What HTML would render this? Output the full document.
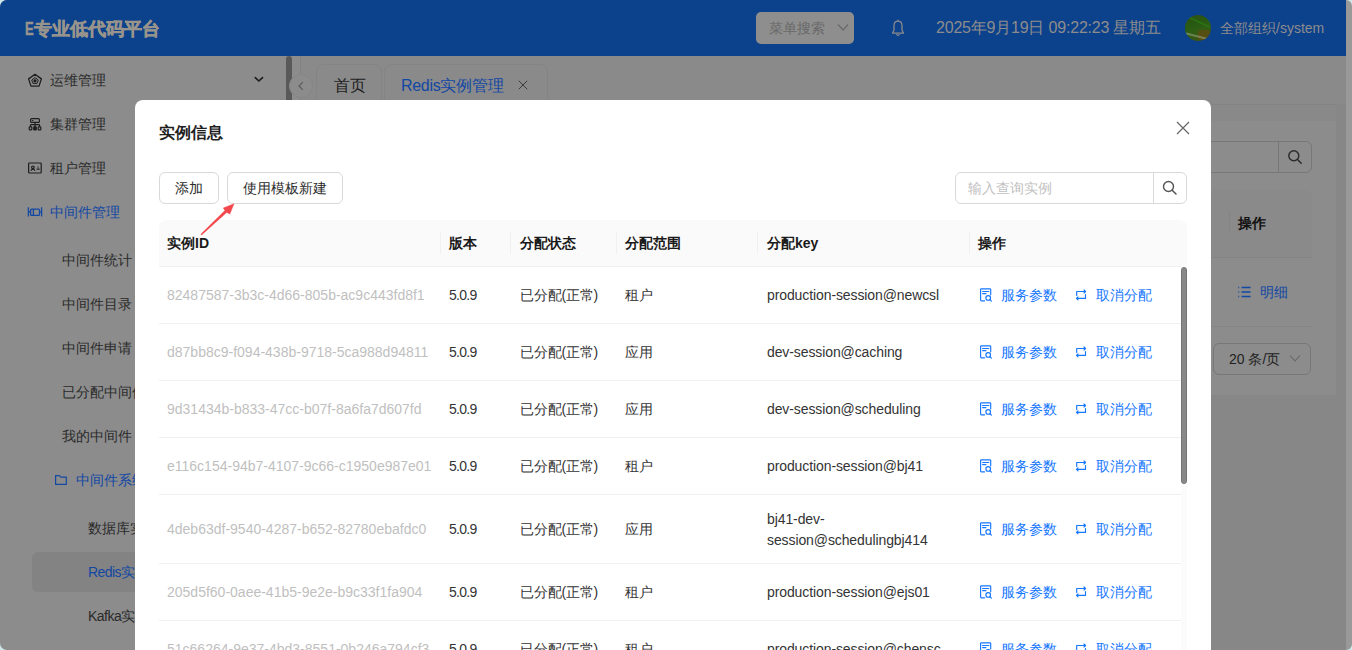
<!DOCTYPE html>
<html><head><meta charset="utf-8">
<style>
*{box-sizing:border-box;margin:0;padding:0}
html,body{width:1352px;height:650px;overflow:hidden;background:#cfe6ea;font-family:"Liberation Sans",sans-serif;font-size:14px}
.abs{position:absolute}
#page{position:absolute;left:0;top:0;width:1346px;height:650px;background:#8c8c8c;border-radius:7px 0 0 7px;overflow:hidden}
#strip{position:absolute;left:1346px;top:0;width:6px;height:650px;background:#999;border-radius:0 7px 7px 0}
#hdr{position:absolute;left:0;top:0;width:1346px;height:56px;background:#0c418c}
.c{position:absolute;white-space:nowrap;height:22px;line-height:22px;font-size:14px}
.side{color:#2a2a2a}
.blue{color:#1247a4}
.cid{color:#bfbfbf}
.cv{color:#333}
.op{color:#1677ff}
.th{top:232px;font-weight:bold;color:#1a1a1a}
.bd{left:159px;width:1022px;height:1px;background:#f0f0f0}
.sep{top:232px;width:1px;height:22px;background:#f0f0f0}
.btn{top:172px;height:32px;border:1px solid #d9d9d9;border-radius:6px;text-align:center;line-height:30px;color:#2b2b2b;font-size:14px;background:#fff}
.ver{letter-spacing:-0.7px}
.st{letter-spacing:-0.2px}
.key{letter-spacing:-0.1px}
</style></head><body>
<div id="page">
  <div id="hdr">
    <div class="abs" style="left:25px;top:18px;height:22px;line-height:22px;font-size:18px;font-weight:bold;color:#98948c;white-space:nowrap;-webkit-text-stroke:0.5px #98948c"><span style="display:inline-block;transform:scaleX(0.72);transform-origin:left;width:9px">E</span>专业低代码平台</div>
    <div class="abs" style="left:756px;top:12px;width:98px;height:32px;background:#8e8e8e;border-radius:5px"></div>
    <div class="c" style="left:769px;top:17px;color:#686868">菜单搜索</div>
    <svg class="abs" style="left:836px;top:22px" width="14" height="11" viewBox="0 0 14 11"><path d="M2 2.5 L7 8 L12 2.5" fill="none" stroke="#6a6a6a" stroke-width="1.2"/></svg>
    <svg class="abs" style="left:890px;top:18px" width="16" height="20" viewBox="0 0 16 20"><path d="M8 3 C5.2 3 4 5.2 4 7.8 L4 12.3 L2.5 15 L13.5 15 L12 12.3 L12 7.8 C12 5.2 10.8 3 8 3 Z M8 1.8 V3 M6.3 16.4 Q8 18.3 9.7 16.4" fill="none" stroke="#8c8c8c" stroke-width="1.25" stroke-linejoin="round"/></svg>
    <div class="abs" style="left:936px;top:17px;height:22px;line-height:22px;font-size:16px;color:#8c8c8c;white-space:nowrap;letter-spacing:-0.2px">2025年9月19日 09:22:23 星期五</div>
    <div class="abs" style="left:1185px;top:15px;width:26px;height:26px;border-radius:50%;overflow:hidden;background:linear-gradient(160deg,#344e12 0%,#275a12 35%,#2f5e14 55%,#3f5012 100%)">
      <div class="abs" style="left:13px;top:15px;width:12px;height:10px;background:#5e4c12;opacity:0.8;border-radius:2px"></div>
      <div class="abs" style="left:2px;top:6px;width:24px;height:2px;background:#2a7a14;transform:rotate(25deg);opacity:0.7"></div>
      <div class="abs" style="left:0px;top:20px;width:22px;height:2px;background:#9aa488;transform:rotate(14deg);opacity:0.55"></div>
    </div>
    <div class="c" style="left:1220px;top:17px;color:#8c8c8c">全部组织/system</div>
  </div>

  <!-- sidebar -->
  <div class="abs" style="left:286px;top:56px;width:6px;height:50px;background:#595959;border-radius:3px 3px 0 0"></div>
  <div class="abs" style="left:300px;top:56px;width:1px;height:50px;background:#838383"></div>
  <svg class="abs" style="left:24px;top:70px" width="22" height="22" viewBox="0 0 22 22" fill="none" stroke="#1e1e1e" stroke-width="1.3" stroke-linejoin="round">
    <path d="M11 4.3 L17.4 8.9 L15 16.1 L7 16.1 L4.6 8.9 Z"/><path d="M11 7.6 L14.3 10 L13 13.4 L9 13.4 L7.7 10 Z" stroke-width="1"/><circle cx="11" cy="10.8" r="1" fill="#1e1e1e"/>
  </svg>
  <svg class="abs" style="left:24px;top:114px" width="22" height="22" viewBox="0 0 22 22" fill="none" stroke="#1e1e1e" stroke-width="1.2">
    <rect x="6.6" y="4.6" width="8.8" height="3.8" rx="1"/><path d="M8.5 6.5 H9" stroke-linecap="round"/><path d="M11 8.4 V12.6 M6.5 10.6 H15.5 M6.5 10.6 V12.8 M15.5 10.6 V12.8"/>
    <rect x="5.2" y="12.8" width="2.6" height="3" rx="0.6"/><rect x="9.7" y="12.8" width="2.6" height="3" rx="0.6" fill="#1e1e1e"/><rect x="14.2" y="12.8" width="2.6" height="3" rx="0.6"/>
  </svg>
  <svg class="abs" style="left:24px;top:158px" width="22" height="22" viewBox="0 0 22 22" fill="none" stroke="#1e1e1e" stroke-width="1.2">
    <rect x="4.6" y="5" width="12.6" height="10" rx="0.8"/><circle cx="8.9" cy="9.3" r="1.3"/><path d="M6.8 12.6 Q8.9 9.8 11 12.6"/><path d="M12.6 11.2 H15.6 M13.5 9.2 H14.5"/>
  </svg>
  <svg class="abs" style="left:24px;top:202px" width="22" height="22" viewBox="0 0 22 22" fill="none" stroke="#1247a4" stroke-width="1.3">
    <path d="M4.4 5.2 V14.6 M17.6 5.2 V14.6 M4.4 9.9 H6.6 M15.5 9.9 H17.6"/><rect x="6.6" y="7.1" width="8.9" height="6.3" rx="1"/><path d="M9.4 7.1 V13.4"/>
  </svg>
  <svg class="abs" style="left:248px;top:68px" width="22" height="22" viewBox="0 0 22 22"><path d="M7.3 9.6 L10.9 13 L14.5 9.6" fill="none" stroke="#1e1e1e" stroke-width="1.7" stroke-linecap="round" stroke-linejoin="round"/></svg>
  <svg class="abs" style="left:50px;top:469px" width="22" height="22" viewBox="0 0 22 22"><path d="M5.6 6.6 H9.3 L10.8 8.1 H16.3 V15.3 H5.6 Z" fill="none" stroke="#1247a4" stroke-width="1.2" stroke-linejoin="round"/></svg>
  <div class="abs" style="left:32px;top:552px;width:250px;height:40px;background:#838383;border-radius:6px"></div>
<div class="c side" style="left:50px;top:69px">运维管理</div>
<div class="c side" style="left:50px;top:113px">集群管理</div>
<div class="c side" style="left:50px;top:157px">租户管理</div>
<div class="c blue" style="left:50px;top:201px">中间件管理</div>
<div class="c side" style="left:62px;top:249px">中间件统计</div>
<div class="c side" style="left:62px;top:293px">中间件目录</div>
<div class="c side" style="left:62px;top:337px">中间件申请</div>
<div class="c side" style="left:62px;top:381px">已分配中间件</div>
<div class="c side" style="left:62px;top:425px">我的中间件</div>
<div class="c blue" style="left:76px;top:469px">中间件系统</div>
<div class="c side" style="left:88px;top:517px">数据库实例</div>
<div class="c blue" style="left:88px;top:561px"><span style='letter-spacing:-0.6px'>Redis</span>实例</div>
<div class="c side" style="left:88px;top:605px"><span style='letter-spacing:-0.5px'>Kafka</span>实例</div>

  <!-- tabs -->
  <div class="abs" style="left:301px;top:56px;width:1045px;height:48px;background:#8a8a8a"></div>
  <div class="abs" style="left:301px;top:104px;width:1045px;height:546px;background:#878787"></div>
  <div class="abs" style="left:301px;top:105px;width:1035px;height:16px;background:#898989"></div>
  <div class="abs" style="left:301px;top:104px;width:1035px;height:1px;background:#838383"></div>
  <div class="abs" style="left:289px;top:74px;width:24px;height:24px;border-radius:50%;background:#8c8c8c;border:1px solid #868686"></div>
  <svg class="abs" style="left:295px;top:80px" width="12" height="12" viewBox="0 0 12 12"><path d="M7.8 2.2 L4 6 L7.8 9.8" fill="none" stroke="#595959" stroke-width="1.1"/></svg>
  <div class="abs" style="left:316px;top:64px;width:66px;height:45px;background:#8a8a8a;border:1px solid #848484;border-radius:8px 8px 0 0"></div>
  <div class="abs" style="left:334px;top:75px;height:22px;line-height:22px;font-size:16px;color:#1c1c1c">首页</div>
  <div class="abs" style="left:384px;top:64px;width:164px;height:45px;background:#8a8a8a;border:1px solid #848484;border-radius:8px 8px 0 0"></div>
  <div class="abs" style="left:401px;top:75px;height:22px;line-height:22px;font-size:16px;color:#1247a4;white-space:nowrap;letter-spacing:-0.3px">Redis实例管理</div>
  <svg class="abs" style="left:517px;top:79px" width="12" height="12" viewBox="0 0 12 12"><path d="M1.8 1.8 L10.2 10.2 M10.2 1.8 L1.8 10.2" stroke="#3c3c3c" stroke-width="1"/></svg>

  <!-- bg content -->
  <div class="abs" style="left:301px;top:121px;width:1035px;height:274px;background:#8c8c8c"></div>
  <div class="abs" style="left:1100px;top:141px;width:212px;height:32px;border:1px solid #777;border-radius:6px"></div>
  <div class="abs" style="left:1278px;top:142px;width:1px;height:30px;background:#777"></div>
  <svg class="abs" style="left:1286px;top:148px" width="18" height="18" viewBox="0 0 18 18"><circle cx="7.8" cy="7.8" r="5" fill="none" stroke="#2a2a2a" stroke-width="1.4"/><path d="M11.5 11.5 L15.2 15.2" stroke="#2a2a2a" stroke-width="1.5" stroke-linecap="round"/></svg>
  <div class="abs" style="left:1100px;top:190px;width:212px;height:67px;background:#8a8a8a;border-radius:0 8px 0 0"></div>
  <div class="abs" style="left:1100px;top:257px;width:212px;height:1px;background:#848484"></div>
  <div class="abs" style="left:1229px;top:212px;width:1px;height:22px;background:#848484"></div>
  <div class="c" style="left:1238px;top:212px;font-weight:bold;color:#111">操作</div>
  <svg class="abs" style="left:1236px;top:284px" width="16" height="16" viewBox="0 0 16 16" fill="none" stroke="#1247a4" stroke-width="1.3"><path d="M5.5 3.5 H14.5 M5.5 8 H14.5 M5.5 12.5 H14.5"/><path d="M2.3 3.5 H3.2 M2.3 8 H3.2 M2.3 12.5 H3.2" stroke-width="1.4"/></svg>
  <div class="c" style="left:1260px;top:281px;color:#1247a4">明细</div>
  <div class="abs" style="left:1100px;top:326px;width:212px;height:1px;background:#848484"></div>
  <div class="abs" style="left:1213px;top:343px;width:98px;height:32px;border:1px solid #777;border-radius:6px"></div>
  <div class="c" style="left:1229px;top:348px;color:#222">20 条/页</div>
  <svg class="abs" style="left:1288px;top:353px" width="14" height="11" viewBox="0 0 14 11"><path d="M2 2.5 L7 8 L12 2.5" fill="none" stroke="#666" stroke-width="1.1"/></svg>

  <!-- modal -->
  <div class="abs" style="left:135px;top:100px;width:1076px;height:600px;background:#fff;border-radius:8px"></div>
  <svg width="0" height="0" style="position:absolute"><defs>
    <g id="i1" fill="none" stroke="#1677ff" stroke-width="1.15" stroke-linecap="round" stroke-linejoin="round">
      <path d="M6.6 14.8 H3.4 Q2.6 14.8 2.6 14 V3.6 Q2.6 2.8 3.4 2.8 H11.9 Q12.7 2.8 12.7 3.6 V8.8"/>
      <path d="M4.6 5.5 H10.8 M4.6 7.6 H8"/>
      <circle cx="10.2" cy="11.9" r="2.3"/>
      <path d="M11.9 13.6 L13.4 15.1"/>
    </g>
    <g id="i2" fill="none" stroke="#1677ff" stroke-width="1.15" stroke-linecap="round" stroke-linejoin="round">
      <path d="M3.7 8.5 V4.5 H12.6 M11 3 L12.6 4.5 L11 6"/>
      <path d="M12.5 7.5 V11.4 H3.5 M5 9.9 L3.5 11.4 L5 12.9"/>
    </g>
  </defs></svg>
  <div class="abs" style="left:159px;top:122px;height:22px;line-height:22px;font-size:16px;font-weight:bold;color:#1f1f1f;white-space:nowrap">实例信息</div>
  <svg class="abs" style="left:1176px;top:121px" width="14" height="14" viewBox="0 0 14 14"><path d="M1 1 L13 13 M13 1 L1 13" stroke="#6a6a6a" stroke-width="1.3" fill="none"/></svg>
  <div class="abs btn" style="left:159px;width:60px">添加</div>
  <div class="abs btn" style="left:227px;width:116px">使用模板新建</div>
  <div class="abs" style="left:955px;top:172px;width:232px;height:32px;border:1px solid #d9d9d9;border-radius:6px"></div>
  <div class="abs" style="left:1153px;top:173px;width:1px;height:30px;background:#d9d9d9"></div>
  <div class="c" style="left:968px;top:177px;color:#bfbfbf">输入查询实例</div>
  <svg class="abs" style="left:1161px;top:179px" width="18" height="18" viewBox="0 0 18 18"><circle cx="7.5" cy="7.5" r="5" fill="none" stroke="#555" stroke-width="1.4"/><path d="M11.2 11.2 L15 15" stroke="#555" stroke-width="1.5" stroke-linecap="round"/></svg>
  <!-- table -->
  <div class="abs" style="left:159px;top:220px;width:1028px;height:46px;background:#fafafa;border-radius:8px 8px 0 0"></div>
  <div class="abs bd" style="top:266px"></div>
  <div class="abs sep" style="left:440px"></div>
  <div class="abs sep" style="left:510px"></div>
  <div class="abs sep" style="left:616px"></div>
  <div class="abs sep" style="left:757px"></div>
  <div class="abs sep" style="left:969px"></div>
  <div class="c th" style="left:167px">实例ID</div>
  <div class="c th" style="left:449px">版本</div>
  <div class="c th" style="left:520px">分配状态</div>
  <div class="c th" style="left:625px">分配范围</div>
  <div class="c th" style="left:767px">分配key</div>
  <div class="c th" style="left:978px">操作</div>
<div class="abs bd" style="top:323px"></div>
<div class="c cid" style="left:167px;top:284.0px">82487587-3b3c-4d66-805b-ac9c443fd8f1</div>
<div class="c cv ver" style="left:449px;top:284.0px">5.0.9</div>
<div class="c cv st" style="left:520px;top:284.0px">已分配(正常)</div>
<div class="c cv" style="left:625px;top:284.0px">租户</div>
<div class="c cv key" style="left:767px;top:284.0px">production-session@newcsl</div>
<svg class="abs" style="left:978px;top:286.0px" width="16" height="16" viewBox="0 0 16 16"><use href="#i1"/></svg>
<div class="c op" style="left:1001px;top:284.0px">服务参数</div>
<svg class="abs" style="left:1073px;top:287.0px" width="16" height="16" viewBox="0 0 16 16"><use href="#i2"/></svg>
<div class="c op" style="left:1096px;top:284.0px">取消分配</div>
<div class="abs bd" style="top:380px"></div>
<div class="c cid" style="left:167px;top:341.0px">d87bb8c9-f094-438b-9718-5ca988d94811</div>
<div class="c cv ver" style="left:449px;top:341.0px">5.0.9</div>
<div class="c cv st" style="left:520px;top:341.0px">已分配(正常)</div>
<div class="c cv" style="left:625px;top:341.0px">应用</div>
<div class="c cv key" style="left:767px;top:341.0px">dev-session@caching</div>
<svg class="abs" style="left:978px;top:343.0px" width="16" height="16" viewBox="0 0 16 16"><use href="#i1"/></svg>
<div class="c op" style="left:1001px;top:341.0px">服务参数</div>
<svg class="abs" style="left:1073px;top:344.0px" width="16" height="16" viewBox="0 0 16 16"><use href="#i2"/></svg>
<div class="c op" style="left:1096px;top:341.0px">取消分配</div>
<div class="abs bd" style="top:437px"></div>
<div class="c cid" style="left:167px;top:398.0px">9d31434b-b833-47cc-b07f-8a6fa7d607fd</div>
<div class="c cv ver" style="left:449px;top:398.0px">5.0.9</div>
<div class="c cv st" style="left:520px;top:398.0px">已分配(正常)</div>
<div class="c cv" style="left:625px;top:398.0px">应用</div>
<div class="c cv key" style="left:767px;top:398.0px">dev-session@scheduling</div>
<svg class="abs" style="left:978px;top:400.0px" width="16" height="16" viewBox="0 0 16 16"><use href="#i1"/></svg>
<div class="c op" style="left:1001px;top:398.0px">服务参数</div>
<svg class="abs" style="left:1073px;top:401.0px" width="16" height="16" viewBox="0 0 16 16"><use href="#i2"/></svg>
<div class="c op" style="left:1096px;top:398.0px">取消分配</div>
<div class="abs bd" style="top:494px"></div>
<div class="c cid" style="left:167px;top:455.0px">e116c154-94b7-4107-9c66-c1950e987e01</div>
<div class="c cv ver" style="left:449px;top:455.0px">5.0.9</div>
<div class="c cv st" style="left:520px;top:455.0px">已分配(正常)</div>
<div class="c cv" style="left:625px;top:455.0px">租户</div>
<div class="c cv key" style="left:767px;top:455.0px">production-session@bj41</div>
<svg class="abs" style="left:978px;top:457.0px" width="16" height="16" viewBox="0 0 16 16"><use href="#i1"/></svg>
<div class="c op" style="left:1001px;top:455.0px">服务参数</div>
<svg class="abs" style="left:1073px;top:458.0px" width="16" height="16" viewBox="0 0 16 16"><use href="#i2"/></svg>
<div class="c op" style="left:1096px;top:455.0px">取消分配</div>
<div class="abs bd" style="top:563px"></div>
<div class="c cid" style="left:167px;top:518.0px">4deb63df-9540-4287-b652-82780ebafdc0</div>
<div class="c cv ver" style="left:449px;top:518.0px">5.0.9</div>
<div class="c cv st" style="left:520px;top:518.0px">已分配(正常)</div>
<div class="c cv" style="left:625px;top:518.0px">应用</div>
<div class="c cv key" style="left:767px;top:507.5px">bj41-dev-</div>
<div class="c cv key" style="left:767px;top:529.0px">session@schedulingbj414</div>
<svg class="abs" style="left:978px;top:520.0px" width="16" height="16" viewBox="0 0 16 16"><use href="#i1"/></svg>
<div class="c op" style="left:1001px;top:518.0px">服务参数</div>
<svg class="abs" style="left:1073px;top:521.0px" width="16" height="16" viewBox="0 0 16 16"><use href="#i2"/></svg>
<div class="c op" style="left:1096px;top:518.0px">取消分配</div>
<div class="abs bd" style="top:620px"></div>
<div class="c cid" style="left:167px;top:581.0px">205d5f60-0aee-41b5-9e2e-b9c33f1fa904</div>
<div class="c cv ver" style="left:449px;top:581.0px">5.0.9</div>
<div class="c cv st" style="left:520px;top:581.0px">已分配(正常)</div>
<div class="c cv" style="left:625px;top:581.0px">租户</div>
<div class="c cv key" style="left:767px;top:581.0px">production-session@ejs01</div>
<svg class="abs" style="left:978px;top:583.0px" width="16" height="16" viewBox="0 0 16 16"><use href="#i1"/></svg>
<div class="c op" style="left:1001px;top:581.0px">服务参数</div>
<svg class="abs" style="left:1073px;top:584.0px" width="16" height="16" viewBox="0 0 16 16"><use href="#i2"/></svg>
<div class="c op" style="left:1096px;top:581.0px">取消分配</div>
<div class="abs bd" style="top:677px"></div>
<div class="c cid" style="left:167px;top:638.0px">51c66264-9e37-4bd3-8551-0b246a794cf3</div>
<div class="c cv ver" style="left:449px;top:638.0px">5.0.9</div>
<div class="c cv st" style="left:520px;top:638.0px">已分配(正常)</div>
<div class="c cv" style="left:625px;top:638.0px">租户</div>
<div class="c cv key" style="left:767px;top:638.0px">production-session@chensc</div>
<svg class="abs" style="left:978px;top:640.0px" width="16" height="16" viewBox="0 0 16 16"><use href="#i1"/></svg>
<div class="c op" style="left:1001px;top:638.0px">服务参数</div>
<svg class="abs" style="left:1073px;top:641.0px" width="16" height="16" viewBox="0 0 16 16"><use href="#i2"/></svg>
<div class="c op" style="left:1096px;top:638.0px">取消分配</div>
  <div class="abs" style="left:1181px;top:267px;width:6px;height:400px;background:#fbfbfb"></div>
  <div class="abs" style="left:1181px;top:267px;width:6px;height:217px;background:#898989;border:1px solid #747474;border-radius:3px"></div>
  <svg class="abs" style="left:196px;top:198px" width="44" height="42" viewBox="0 0 44 42"><path d="M4.79 36.16 L28.91 12.55 L27.3 9.9 L38 5.8 L33.9 16.1 L30.69 14.45 L5.61 37.04 Z" fill="#f2474d" stroke="#f2474d" stroke-width="0.4" stroke-linejoin="round"/></svg>
</div>
<div id="strip"></div>
</body></html>
